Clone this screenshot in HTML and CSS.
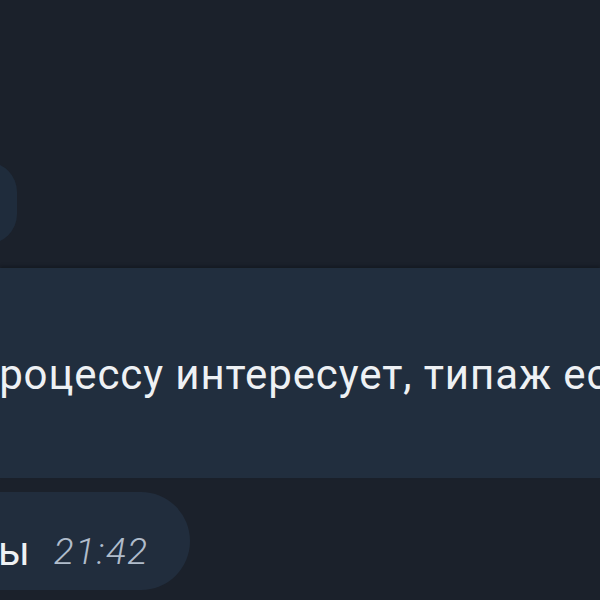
FILE: index.html
```html
<!DOCTYPE html>
<html lang="ru">
<head>
    <meta charset="UTF-8">
    <meta name="viewport" content="width=device-width, initial-scale=1.0">
    <title>Chat</title>
    <link rel="stylesheet" href="styles.css">
</head>
<body>
    <div class="chat">
        <div class="bubble-stub"></div>

        <div class="band">
            <p class="band-text">процессу интересует, типаж если</p>
        </div>

        <div class="bubble">
            <span class="bubble-text">ы</span>
            <span class="time">21:42</span>
        </div>
    </div>
</body>
</html>
```

FILE: styles.css
```css
body {
    margin: 0;
    padding: 0;
    background: #1b212b;
    font-family: Roboto, 'Noto Sans', sans-serif;
    color: #eef1f4;
}

.chat {
    width: 600px;
    height: 600px;
    overflow: hidden;
    padding-top: 162px;
    box-sizing: border-box;
}

.bubble-stub {
    width: 60px;
    height: 82px;
    margin-left: -43px;
    border-radius: 41px;
    background: #1f2c3c;
}

.band {
    margin-top: 24px;
    height: 210px;
    background: #212e3e;
    display: flex;
    align-items: center;
    box-shadow: 0 -2px 3px rgba(10, 14, 20, 0.4);
}

.band-text {
    margin: 0 0 0 -26px;
    white-space: nowrap;
    font-size: 42px;
    letter-spacing: 0.9px;
    padding-top: 2px;
}

.bubble {
    margin-top: 14px;
    width: 190px;
    height: 98px;
    border-radius: 0 50px 50px 0;
    background: #212d3d;
    display: flex;
    align-items: center;
    gap: 24px;
    padding-top: 20px;
    box-sizing: border-box;
}

.bubble-text {
    font-size: 41px;
    margin-left: -2px;
}

.time {
    font-size: 37px;
    font-weight: 300;
    font-style: italic;
    letter-spacing: 1.5px;
    color: #b0bccb;
}
```
